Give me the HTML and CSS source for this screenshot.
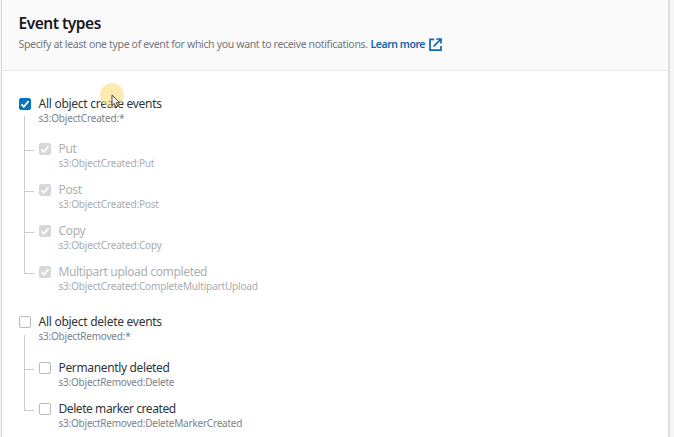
FILE: index.html
```html
<!DOCTYPE html>
<html lang="en">
<head>
<meta charset="utf-8">
<title>Event types</title>
<link rel="stylesheet" href="styles.css">
</head>
<body>
<svg class="defs" width="0" height="0"><symbol id="check" viewBox="0 0 12 12"><path d="M2.4 6.3 4.8 8.7 9.6 3.1" fill="none" stroke="#fff" stroke-width="1.7"/></symbol></svg>
<section class="panel">
  <header class="header">
    <h2>Event types</h2>
    <p><span class="intro">Specify at least one type of event for which you want to receive notifications.</span><a class="learn">Learn more</a><svg class="external" viewBox="0 0 13 13"><path d="M5.2 1.4H1v10.8h11V7.9M7.4 1H12v4.6M12 1 4.7 8.3" fill="none" stroke="#1166ae" stroke-width="1.7"/></svg></p>
  </header>
  <div class="content">
    <div class="group">
      <div class="row parent"><span class="box checked"><svg><use href="#check"/></svg></span><div><div class="label all">All object create events</div><div class="desc">s3:ObjectCreated:*</div></div></div>
      <div class="children disabled">
        <div class="row"><span class="box"><svg><use href="#check"/></svg></span><div><div class="label">Put</div><div class="desc">s3:ObjectCreated:Put</div></div></div>
        <div class="row"><span class="box"><svg><use href="#check"/></svg></span><div><div class="label">Post</div><div class="desc">s3:ObjectCreated:Post</div></div></div>
        <div class="row"><span class="box"><svg><use href="#check"/></svg></span><div><div class="label">Copy</div><div class="desc">s3:ObjectCreated:Copy</div></div></div>
        <div class="row"><span class="box"><svg><use href="#check"/></svg></span><div><div class="label">Multipart upload completed</div><div class="desc">s3:ObjectCreated:CompleteMultipartUpload</div></div></div>
      </div>
    </div>
    <div class="group">
      <div class="row parent"><span class="box"></span><div><div class="label all">All object delete events</div><div class="desc removed">s3:ObjectRemoved:*</div></div></div>
      <div class="children">
        <div class="row"><span class="box"></span><div><div class="label">Permanently deleted</div><div class="desc removed">s3:ObjectRemoved:Delete</div></div></div>
        <div class="row"><span class="box"></span><div><div class="label marker">Delete marker created</div><div class="desc removed">s3:ObjectRemoved:DeleteMarkerCreated</div></div></div>
      </div>
    </div>
  </div>
</section>
<div class="pointer"><svg viewBox="0 0 10 14"><path d="M1 1v10.5l2.3-2.1 1.5 3.5 1.9-.8-1.5-3.4h3.3z" fill="#fff" stroke="#333" stroke-width=".9"/></svg></div>
</body>
</html>
```
FILE: styles.css
```css
* { box-sizing: border-box; }
body { margin: 0; height: 437px; overflow: hidden; position: relative; background: #f7f7f7; font-family: "Noto Sans", "Open Sans", sans-serif; color: #30353c; }
.defs { display: block; }
.panel { width: 669px; height: 437px; margin-left: 1px; background: #fff; border-left: 1px solid #d5d5d5; border-right: 2px solid #dedede; overflow: hidden; }
.header { height: 71px; padding: 13px 16.5px 0; background: #fafafa; border-bottom: 1px solid #ececec; }
h2 { margin: 0; font-size: 15.5px; line-height: 20px; font-weight: 600; letter-spacing: -.48px; color: #16191f; }
p { margin: 3px 0 0; display: flex; align-items: center; font-size: 10.5px; line-height: 16px; color: #72777d; white-space: nowrap; }
.intro { width: 352px; letter-spacing: -.335px; }
.learn { width: 58.5px; font-weight: 600; color: #1166ae; letter-spacing: -.45px; }
.external { width: 13px; height: 13px; }
.content { padding: 24.6px 0 0 16.5px; }
.group { height: 218.6px; }
.row { display: flex; height: 41.1px; gap: 8px; white-space: nowrap; position: relative; }
.parent { height: 45.4px; }
.box { width: 12px; height: 12px; margin-top: 2px; flex: none; border: 1px solid #b7bbbd; border-radius: 2px; background: #fff; }
.box svg { display: block; width: 12px; height: 12px; margin: -1px; }
.checked { background: #0972bd; border-color: #0972bd; }
.label { font-size: 12px; line-height: 16px; letter-spacing: -.35px; }
.all { letter-spacing: -.27px; }
.marker { letter-spacing: -.43px; }
.desc { margin-top: -1px; font-size: 10px; line-height: 15px; letter-spacing: -.17px; color: #7d8288; }
.removed { letter-spacing: -.22px; }
.children { padding-left: 20px; position: relative; }
.children .row::before { content: ""; position: absolute; left: -14.5px; top: -33px; width: 9px; height: 42px; border-left: 1px solid #c9cdcf; border-bottom: 1px solid #c9cdcf; }
.children .row:first-child::before { top: -25px; height: 34px; }
.disabled .box { background: #d5d7d8; border-color: #d5d7d8; }
.disabled .label { color: #adb0b2; }
.disabled .desc { color: #a8acaf; }
.pointer { position: absolute; left: 100px; top: 83px; width: 24px; height: 24px; border-radius: 50%; background: rgba(250, 220, 125, .6); }
.pointer svg { position: absolute; left: 11px; top: 11px; width: 10px; height: 14px; }
```
